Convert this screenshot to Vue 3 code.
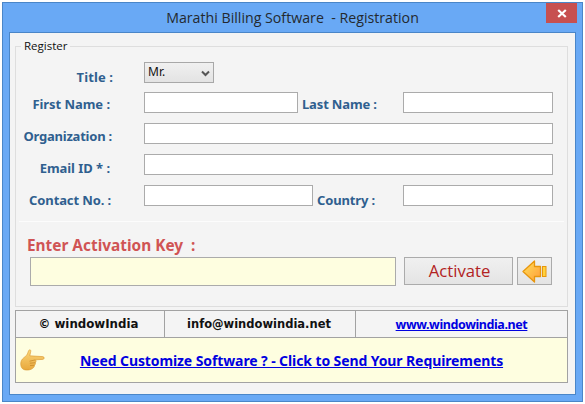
<script setup>
const title = 'Marathi Billing Software \u00a0- Registration'
</script>

<template>
  <div class="page">
    <div class="window">
      <header class="titlebar">
        <span class="title">{{ title }}</span>
        <button class="close" type="button" aria-label="Close">
          <svg width="10" height="9" viewBox="0 0 10 9"><path d="M1.2 1 8.8 8M8.8 1 1.2 8" stroke="#fff" stroke-width="2.2" fill="none"/></svg>
        </button>
      </header>
      <main class="client">
        <fieldset class="register">
          <legend>Register</legend>
          <div class="row row-title">
            <label class="lab lab-title">Title :</label>
            <div class="select-wrap">
              <select class="select"><option>Mr.</option></select>
              <svg class="chev" width="9" height="7" viewBox="0 0 9 7"><path d="M1 1.5 4.500 5 8 1.500" stroke="#555" stroke-width="2" fill="none"/></svg>
            </div>
          </div>
          <div class="row">
            <label class="lab lab-first">First Name :</label>
            <input class="input w-first" />
            <label class="lab-inline lab-last">Last Name :</label>
            <input class="input w-side" />
          </div>
          <div class="row">
            <label class="lab lab-org">Organization :</label>
            <input class="input w-full" />
          </div>
          <div class="row">
            <label class="lab lab-email">Email ID * :</label>
            <input class="input w-full" />
          </div>
          <div class="row">
            <label class="lab lab-contact">Contact No. :</label>
            <input class="input w-contact" />
            <label class="lab-inline lab-country">Country :</label>
            <input class="input w-side" />
          </div>
          <hr class="sep" />
          <div class="key-label">Enter Activation Key &nbsp;:</div>
          <div class="key-row">
            <input class="key-input" />
            <button class="activate" type="button">Activate</button>
            <button class="back" type="button" aria-label="Back">
              <svg width="25" height="23" viewBox="0 0 25 23">
                <defs>
                  <linearGradient id="ag" x1="0" y1="0" x2="1" y2="1">
                    <stop offset="0" stop-color="#ffe25a"/>
                    <stop offset="1" stop-color="#ff9a3a"/>
                  </linearGradient>
                </defs>
                <path d="M12.500 1 1 11.500 12.500 22V16.500H18.500V6.500H12.500Z" fill="url(#ag)" stroke="#e8960c" stroke-width="1.300" stroke-linejoin="round"/>
                <rect x="20.500" y="6.500" width="3.500" height="10" fill="#ffd23c" stroke="#e8960c"/>
              </svg>
            </button>
          </div>
        </fieldset>
        <section class="info">
          <div class="info-top">
            <div class="cell c1">© windowIndia</div>
            <div class="cell c2">info@windowindia.net</div>
            <div class="cell c3"><a href="#" class="site">www.windowindia.net</a></div>
          </div>
          <div class="info-bottom">
            <svg class="hand" width="25" height="22" viewBox="0 0 25 22">
              <defs>
                <linearGradient id="hg" x1="0" y1="0" x2="0" y2="1">
                  <stop offset="0" stop-color="#fbd67a"/>
                  <stop offset="1" stop-color="#e8a83c"/>
                </linearGradient>
              </defs>
              <path d="M9.500 .8C10.800 .6 11 2 10.600 3.200L9.800 6.800 22.800 7.600C24.700 7.900 24.700 10.200 22.800 10.400L15.600 10.800C16.300 12 16.100 13 15.400 13.600 15.700 14.800 15.300 15.800 14.400 16.300 14.500 17.400 14 18.500 13 19 11.500 21 6 21.800 3.200 20.200 .6 18.600 .2 14.500 1.400 11.600 2.500 9.200 5.200 7.800 6.500 6.400 8 4.800 8 1.500 9.500 .8Z" fill="url(#hg)" stroke="#d9962e" stroke-width=".6"/>
              <path d="M9.500 12.200 15.300 10.900M9.800 14.200 15.300 13.700M10 16.500 14.400 16.300" stroke="#c98a2a" stroke-width=".8" fill="none"/>
            </svg>
            <a href="#" class="need">Need Customize Software ? - Click to Send Your Requirements</a>
          </div>
        </section>
      </main>
    </div>
  </div>
</template>

<style>
html, body { margin: 0; background: #fff; }
</style>

<style scoped>
.page {
  width: 585px;
  height: 404px;
  padding: 2px 2px 2px 2px;
  box-sizing: border-box;
  overflow: hidden;
  font-family: "Noto Sans", sans-serif;
}
.window {
  width: 581px;
  height: 400px;
  box-sizing: border-box;
  border: 1px solid #4a86c8;
  background: #69a9f5;
  padding: 0 6px 6px;
  display: flex;
  flex-direction: column;
}
.titlebar {
  height: 29px;
  position: relative;
  display: flex;
  align-items: center;
  justify-content: center;
  flex: none;
}
.title {
  font: 14.200px "Open Sans", sans-serif;
  color: #24292f;
  margin-top: -1px;
  white-space: pre;
}
.close {
  position: absolute;
  right: -1px;
  top: 0;
  width: 31px;
  height: 20px;
  padding: 0;
  border: 0;
  background: #c75050;
  display: flex;
  align-items: center;
  justify-content: center;
}
.client {
  flex: 1;
  background: #f4f4f4;
  border: 1px solid #4a86c8;
  padding: 0 7px 0 5px;
  display: flex;
  flex-direction: column;
  min-height: 0;
}
.register {
  margin: 6px 0 0;
  padding: 9px 0 0;
  width: 553px;
  height: 268px;
  box-sizing: border-box;
  border: 1px solid #dedede;
  min-inline-size: 0;
}
legend {
  margin-left: 5px;
  padding: 0 3px;
  font: 11.500px/14px "Open Sans", sans-serif;
  color: #111;
}
.row {
  display: flex;
  align-items: center;
  height: 21px;
  margin-bottom: 10px;
}
.row-title { margin-bottom: 9px; }
.lab, .lab-inline {
  font: bold 13px "Noto Sans", sans-serif;
  letter-spacing: -.15px;
  color: #2f5f8f;
  white-space: nowrap;
  box-sizing: border-box;
}
.lab { width: 128px; text-align: right; flex: none; letter-spacing: -.05px; }
.lab-title { padding: 8px 31px 0 0; letter-spacing: .1px; }
.lab-first { padding: 2px 34px 0 0; }
.lab-org { padding: 4px 32px 0 0; letter-spacing: -.22px; }
.lab-email { padding: 6px 34px 0 0; }
.lab-contact { padding: 8px 33px 0 0; letter-spacing: -.12px; }
.lab-inline { flex: none; }
.lab-last { width: 105px; padding: 2px 0 0 4px; }
.lab-country { width: 90px; padding: 8px 0 0 4px; }
.input {
  height: 21px;
  box-sizing: border-box;
  border: 1px solid #ababab;
  background: #fff;
  padding: 0 3px;
  flex: none;
  outline: none;
}
.w-first { width: 154px; }
.w-side { width: 150px; }
.w-full { width: 409px; }
.w-contact { width: 169px; }
.select-wrap {
  position: relative;
  width: 70px;
  height: 21px;
  flex: none;
}
.select {
  appearance: none;
  width: 100%;
  height: 100%;
  box-sizing: border-box;
  border: 1px solid #a8a8a8;
  background: linear-gradient(#f0f0f0, #e3e3e3);
  font: 12px "Noto Sans", sans-serif;
  color: #111;
  padding: 0 0 2px 3px;
  display: block;
}
.chev {
  position: absolute;
  right: 4px;
  top: 8px;
  pointer-events: none;
}
.sep {
  margin: 15px 3px 0;
  border: 0;
  height: 1px;
  background: #fcfcfc;
}
.key-label {
  font: bold 15.400px/18px "Noto Sans", sans-serif;
  color: #d05454;
  margin: 15px 0 0 11px;
  white-space: pre;
}
.key-row {
  display: flex;
  align-items: flex-start;
  margin: 2px 0 0 14px;
}
.key-input {
  width: 366px;
  height: 29px;
  box-sizing: border-box;
  border: 1px solid #ababab;
  background: #fefee0;
  flex: none;
  outline: none;
}
.activate {
  width: 109px;
  height: 28px;
  margin-left: 8px;
  padding: 0 0 2px 2px;
  box-sizing: border-box;
  border: 1px solid #ababab;
  background: linear-gradient(#f0f0f0, #e4e4e4);
  font: 16.700px "Open Sans", sans-serif;
  color: #b22222;
  flex: none;
}
.back {
  width: 35px;
  height: 28px;
  margin-left: 4px;
  padding: 0;
  box-sizing: border-box;
  border: 1px solid #ababab;
  background: linear-gradient(#f0f0f0, #e4e4e4);
  display: flex;
  align-items: center;
  justify-content: center;
  flex: none;
}
.info {
  margin-top: 3px;
  width: 553px;
  height: 73px;
  box-sizing: border-box;
  border: 1px solid #a2a2a2;
  display: flex;
  flex-direction: column;
}
.info-top {
  display: grid;
  grid-template-columns: 148px 191px 1fr;
  height: 26px;
  flex: none;
  border-bottom: 1px solid #a2a2a2;
}
.cell {
  display: flex;
  align-items: center;
  justify-content: center;
  font: bold 11.800px "DejaVu Sans", sans-serif;
  color: #111;
  border-left: 1px solid #a2a2a2;
}
.c1 { border-left: 0; padding-right: 3px; }
.c2 { font-size: 11.500px; padding-right: 2px; }
.site {
  font: bold 12.500px "Noto Sans", sans-serif;
  letter-spacing: -.4px;
  color: #0000e0;
}
.info-bottom {
  flex: 1;
  background: #fefee0;
  display: flex;
  align-items: center;
  justify-content: center;
  position: relative;
}
.hand {
  position: absolute;
  left: 4px;
  top: 11px;
}
.need {
  font: bold 14px "Noto Sans", sans-serif;
  letter-spacing: -.1px;
  color: #0000e0;
}
</style>
